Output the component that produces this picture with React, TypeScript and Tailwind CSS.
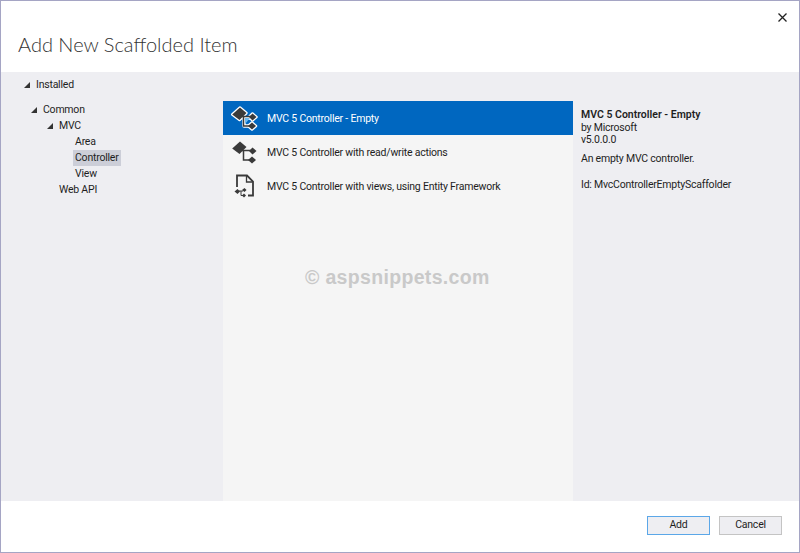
const font = { fontFamily: 'Roboto, "Open Sans", sans-serif' };

function Arrow() {
  return (
    <svg width="6" height="6" viewBox="0 0 6 6" className="shrink-0">
      <path d="M6 0V6H0Z" fill="#333" />
    </svg>
  );
}

function TreeRow({ pl, label, open, active }: { pl: string; label: string; open?: boolean; active?: boolean }) {
  return (
    <div className={`flex h-[15.900px] items-center ${pl}`}>
      {open && (
        <span className="mr-[4px]">
          <Arrow />
        </span>
      )}
      <span className={`px-0.5 leading-4 ${active ? "bg-[#ccced8]" : ""}`}>{label}</span>
    </div>
  );
}

function ControllerIcon({ selected }: { selected?: boolean }) {
  const shapes = (
    <>
      <path d="M2.200 11.500 10 4.500l6.500 5.500-7 7Z" />
      <path d="M19 14 22.500 10.500 26.500 14 22.500 17.500Z" />
      <path d="M18 23 22 19.500 26 23 22 26.500Z" />
    </>
  );
  return (
    <svg width="30" height="30" viewBox="0 0 30 30">
      {selected && (
        <g fill="#fff" stroke="#fff" strokeWidth="2.500" strokeLinejoin="round">
          {shapes}
          <path d="M14 15h7M14 15V23h5" fill="none" strokeWidth="3.500" />
        </g>
      )}
      {selected && <path d="M15 15h5l-5 6Z" fill="#6fb9ee" />}
      <g fill="#3a3a3a">{shapes}</g>
      <path d="M12 13.500h9M13.500 13.500V23h7" fill="none" stroke="#3a3a3a" strokeWidth="1.500" />
    </svg>
  );
}

function PageIcon() {
  return (
    <svg width="30" height="30" viewBox="0 0 30 30">
      <path d="M7 16V4.500h10l6 6V24.500H18" fill="none" stroke="#3a3a3a" strokeWidth="1.800" />
      <path d="M16.500 5v6h6" fill="none" stroke="#3a3a3a" strokeWidth="1.300" />
      <g fill="#3a3a3a">
        <path d="M4.500 20.500 7.500 18 10 20.500 7.500 23Z" />
        <path d="M12 19 14.500 17 16.500 19 14.500 21Z" />
        <path d="M12 24.500 14 22.500 16 24.500 14 26.500Z" />
      </g>
      <path d="M9 20h4M11 20v4.500h2" fill="none" stroke="#3a3a3a" strokeWidth="1" />
    </svg>
  );
}

function ListRow({ label, selected, children }: { label: string; selected?: boolean; children: React.ReactNode }) {
  return (
    <div className={`flex h-[34px] items-center gap-[7px] pl-[7px] ${selected ? "bg-[#0067c0] text-white" : "text-[#1e1e1e]"}`}>
      <span className="flex w-[30px] shrink-0 justify-center">{children}</span>
      <span className="pt-px">{label}</span>
    </div>
  );
}

export default function App() {
  return (
    <div
      style={font}
      className="relative flex h-[553px] w-[800px] flex-col overflow-hidden border border-[#a5a5c4] bg-white text-[10.500px] tracking-[-0.22px] text-[#1e1e1e]"
    >
      <header className="flex h-[71px] shrink-0 items-start justify-between">
        <h1 className="pl-[17px] pt-[29px] font-[Lato] text-[20px] leading-7 font-light tracking-normal text-[#333]">Add New Scaffolded Item</h1>
        <svg width="9" height="9" viewBox="0 0 9 9" className="mr-[12px] mt-3">
          <path d="M.5.5l8 8M8.500.5l-8 8" stroke="#222" strokeWidth="1.300" fill="none" />
        </svg>
      </header>

      <main className="flex min-h-0 flex-1 bg-[#eeeef2]">
        <nav className="w-[222px] shrink-0 pt-[5.500px]">
          <TreeRow pl="pl-[23px]" label="Installed" open />
          <div className="mt-[9px]">
            <TreeRow pl="pl-[30px]" label="Common" open />
            <TreeRow pl="pl-[46px]" label="MVC" open />
            <TreeRow pl="pl-[72px]" label="Area" />
            <TreeRow pl="pl-[72px]" label="Controller" active />
            <TreeRow pl="pl-[72px]" label="View" />
            <TreeRow pl="pl-[56px]" label="Web API" />
          </div>
        </nav>

        <section className="mt-[29px] w-[350px] shrink-0 bg-[#f5f5f5]">
          <ListRow label="MVC 5 Controller - Empty" selected>
            <ControllerIcon selected />
          </ListRow>
          <ListRow label="MVC 5 Controller with read/write actions">
            <ControllerIcon />
          </ListRow>
          <ListRow label="MVC 5 Controller with views, using Entity Framework">
            <PageIcon />
          </ListRow>
        </section>

        <aside className="flex-1 pl-[8px] pt-[37px] leading-[12.500px]">
          <p className="font-semibold tracking-normal">MVC 5 Controller - Empty</p>
          <p>by Microsoft</p>
          <p>v5.0.0.0</p>
          <p className="mt-[6px]">An empty MVC controller.</p>
          <p className="mt-[14px]">Id: MvcControllerEmptyScaffolder</p>
        </aside>
      </main>

      <footer className="flex h-[51px] shrink-0 items-start justify-end gap-[9px] pr-[17px] pt-[15px]">
        <button className="h-[19px] w-[63px] border border-[#5ba7e8] bg-[#eeeef2] leading-none">Add</button>
        <button className="h-[19px] w-[63px] border border-[#c4c4c4] bg-[#eeeef2] leading-none">Cancel</button>
      </footer>

      <div className="absolute left-[304px] top-[264px] text-[19.500px] leading-6 font-bold tracking-[0.33px] text-[#c9c9c9]" style={{ fontFamily: '"Liberation Sans", Arial, sans-serif' }}>
        © aspsnippets.com
      </div>
    </div>
  );
}
